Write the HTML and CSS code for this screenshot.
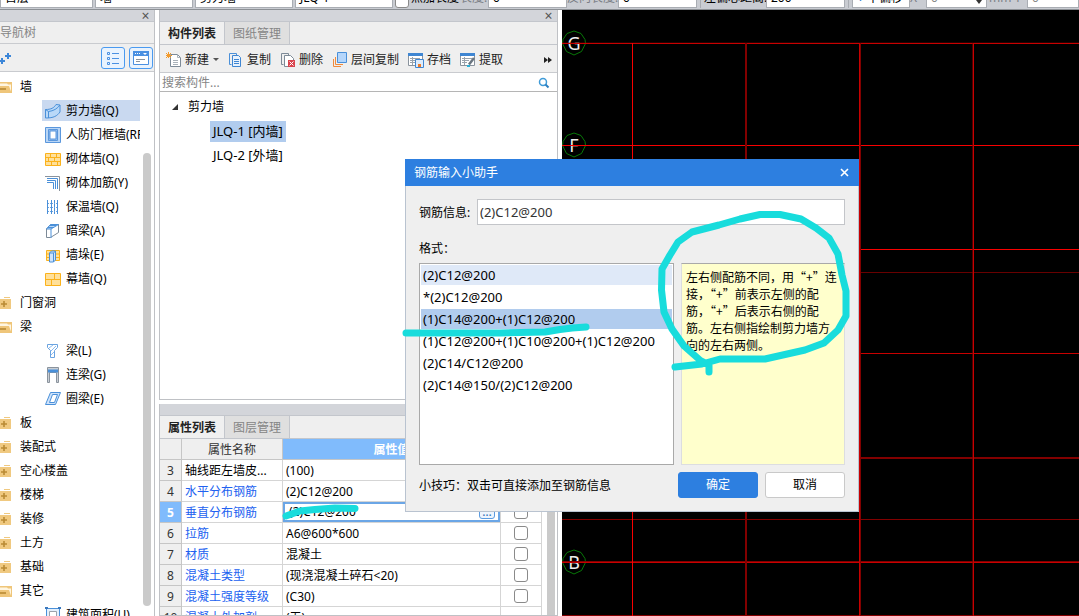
FILE: index.html
```html
<!DOCTYPE html>
<html lang="zh-CN">
<head>
<meta charset="utf-8">
<title>钢筋输入小助手</title>
<link rel="stylesheet" href="styles.css">
</head>
<body>
<svg class="defs" aria-hidden="true">
  <symbol id="closed" viewBox="0 0 12 14"><path d="M0 3h4V1h6v2h1v10H0z" fill="#f0c980"/><path d="M4 2.500h6" stroke="#fff" stroke-width="1"/><path d="M4 5v6M1 8h6" stroke="#b98a34" stroke-width="1.600"/></symbol>
  <symbol id="opened" viewBox="0 0 12 14"><path d="M0 2h12v11H0z" fill="#efc67a"/><path d="M0 3.500h7l1 1h3v7L9 6H0z" fill="#fff6e2"/><path d="M0 6h8l2 7H0z" fill="#efc67a"/><path d="M0 9h6" stroke="#b98a34" stroke-width="1.600"/></symbol>
  <symbol id="shear" viewBox="0 0 16 16"><path d="M.5 6.500C6 6.500 9 5 11 1.500l4 .5v7c-3 4-6 6-14.500 6z" fill="#b9d8f8" stroke="#4a90d9"/><path d="M.5 6.500l3 2c5-.5 9-3 11.500-6.500M3.500 8.500v6.500" fill="none" stroke="#4a90d9"/></symbol>
  <symbol id="frame" viewBox="0 0 16 16"><path d="M.5.500h15v15H.5z" fill="#b9d6f6" stroke="#5b97dc"/><path d="M3.500 2.500h9v11h-9z" fill="#8db9ee" stroke="#5b97dc"/><path d="M5 4h6v8H5z" fill="#fff" stroke="#5b97dc"/></symbol>
  <symbol id="brick" viewBox="0 0 16 16"><path d="M.5 2.500h15v12H.5z" fill="#ffe09a" stroke="#fbb21c"/><path d="M0 6.500h16M0 10.500h16M5.500 2v4M11.500 2v4M3.500 7v4M9.500 7v4M6.500 11v4M12.500 11v4" stroke="#fbb21c"/></symbol>
  <symbol id="rebar" viewBox="0 0 16 16"><path d="M0 1.500h14.500V16" fill="none" stroke="#8a939d"/><path d="M2 3.500h10.500V14M2 5.500h8.500V14M2 7.500h6.500V14" fill="none" stroke="#4a90d9"/></symbol>
  <symbol id="insul" viewBox="0 0 16 16"><path d="M2.500 1v14M6.500 1v14M9.500 1v14M12.500 1v14" stroke="#4a90d9"/><path d="M3 4.500h10M3 8.500h10M3 12.500h10" stroke="#6aa3e0" stroke-dasharray="1 1"/></symbol>
  <symbol id="hbeam" viewBox="0 0 16 16"><path d="M1.500 6l4-4.500h8v8l-8 5h-4z" fill="#fff" stroke="#7d8a97"/><path d="M1.500 6l4-4.500h8L6 6z" fill="#b9d8f8" stroke="#4a90d9"/><path d="M6 6v9M3 4.500h6M5 2.500h6" fill="none" stroke="#4a90d9"/></symbol>
  <symbol id="pier" viewBox="0 0 16 16"><path d="M1.500 3.500h13v10h-13z" fill="#ffe09a" stroke="#fbb21c"/><path d="M1 7h14M1 10.500h14" stroke="#fbb21c"/><path d="M4.500 6l2-2h4v9l-2 2h-4z" fill="#cfe3fb" stroke="#4a90d9"/><path d="M8.500 6v9M4.500 6h4l2-2" fill="none" stroke="#4a90d9"/></symbol>
  <symbol id="curtain" viewBox="0 0 16 16"><path d="M.5 2.500h15v12H.5z" fill="#ffe09a" stroke="#fbb21c"/><path d="M0 8.500h16M9.500 2v6M6.500 9v6" stroke="#fbb21c"/></symbol>
  <symbol id="beam" viewBox="0 0 16 16"><path d="M2.500 1.500h10v3l-3 3v7h-4v-7l-3-3z" fill="#fff" stroke="#6aa3e0"/><path d="M4 5l4-3M6 8l5-5M6 12l3-3" stroke="#8cbcf0"/></symbol>
  <symbol id="link" viewBox="0 0 16 16"><path d="M2.500.500h11v15h-2V5.500h-7v10h-2z" fill="#c9ced4" stroke="#8a939d"/><path d="M3 2.500h10v3H3z" fill="#4a90d9"/></symbol>
  <symbol id="ring" viewBox="0 0 16 16"><path d="M5.500 1.500h10l-5 12H.5z" fill="#cfe3fb" stroke="#4a90d9"/><path d="M7.500 3.500h5l-3 8h-5z" fill="#fff" stroke="#4a90d9"/></symbol>
  <symbol id="area" viewBox="0 0 16 16"><path d="M1.500 1.500h13V16h-13z" fill="#e3effc" stroke="#4a90d9"/><path d="M4.500 4.500h7V16h-7z" fill="#fff" stroke="#9aa3ac"/><path d="M0 0h3v2H0zM13 0h3v2h-3z" fill="#3a78bd"/></symbol>
</svg>

<header class="topbar">
  <div class="box w-first">首层</div>
  <div class="box w-drop">墙</div>
  <div class="box w-drop">剪力墙</div>
  <div class="box w-drop">JLQ-1</div>
  <input class="check" type="checkbox" aria-label="点加长度">
  <span class="lab dark w-add">点加长度</span>
  <span class="lab w-len">长度:</span>
  <div class="box w-num">0</div>
  <span class="lab w-rev">反向长度:</span>
  <div class="box w-num">0</div>
  <i class="sep"></i>
  <span class="lab dark w-off">左偏心距离:</span>
  <div class="box w-num">200</div>
  <i class="sep"></i>
  <div class="box w-mode"><b class="plus">+</b> 不偏移</div>
  <span class="lab w-x">X=</span>
  <div class="box w-spin muted"><span>0</span><i class="spin"></i></div>
  <span class="lab w-mm">mm Y=</span>
  <div class="box w-rest muted">0</div>
</header>

<main class="work">
  <aside class="nav">
    <div class="strip"><button class="x" aria-label="关闭">×</button></div>
    <h2 class="navtitle">导航树</h2>
    <div class="navtools">
      <svg class="pluses" width="12" height="14"><path d="M0 10h5M2 7v6M5 5h6M8 2v6" stroke="#3c86d8" stroke-width="2"/></svg>
      <span class="grow"></span>
      <button class="sq" aria-label="列表"><svg width="14" height="14"><path d="M1.500 1.500h2v2h-2zM1.500 6.500h2v2h-2zM1.500 11.500h2v2h-2z" fill="none" stroke="#4a90e2"/><path d="M6 2.500h7M6 7.500h7M6 12.500h7" stroke="#4a90e2"/></svg></button>
      <button class="sq" aria-label="窗口"><svg width="16" height="14"><path d="M.5.500h15v13H.5z" fill="#fff" stroke="#4a90e2"/><path d="M0 0h16v5H0z" fill="#4a90e2"/><path d="M2 2h1v1H2zM4 2h1v1H4zM6 2h1v1H6zM10 2h4l-2 2z" fill="#fff"/><path d="M3 8.500h9M3 10.500h4" stroke="#8a939d"/></svg></button>
    </div>
    <div class="navbody">
      <ul class="tree">
        <li class="group"><svg><use href="#opened"/></svg>墙</li>
        <li class="leaf sel"><svg><use href="#shear"/></svg>剪力墙(Q)</li>
        <li class="leaf"><svg><use href="#frame"/></svg>人防门框墙(RF)</li>
        <li class="leaf"><svg><use href="#brick"/></svg>砌体墙(Q)</li>
        <li class="leaf"><svg><use href="#rebar"/></svg>砌体加筋(Y)</li>
        <li class="leaf"><svg><use href="#insul"/></svg>保温墙(Q)</li>
        <li class="leaf"><svg><use href="#hbeam"/></svg>暗梁(A)</li>
        <li class="leaf"><svg><use href="#pier"/></svg>墙垛(E)</li>
        <li class="leaf"><svg><use href="#curtain"/></svg>幕墙(Q)</li>
        <li class="group"><svg><use href="#closed"/></svg>门窗洞</li>
        <li class="group"><svg><use href="#opened"/></svg>梁</li>
        <li class="leaf"><svg><use href="#beam"/></svg>梁(L)</li>
        <li class="leaf"><svg><use href="#link"/></svg>连梁(G)</li>
        <li class="leaf"><svg><use href="#ring"/></svg>圈梁(E)</li>
        <li class="group"><svg><use href="#closed"/></svg>板</li>
        <li class="group"><svg><use href="#closed"/></svg>装配式</li>
        <li class="group"><svg><use href="#closed"/></svg>空心楼盖</li>
        <li class="group"><svg><use href="#closed"/></svg>楼梯</li>
        <li class="group"><svg><use href="#closed"/></svg>装修</li>
        <li class="group"><svg><use href="#closed"/></svg>土方</li>
        <li class="group"><svg><use href="#closed"/></svg>基础</li>
        <li class="group"><svg><use href="#opened"/></svg>其它</li>
        <li class="leaf"><svg><use href="#area"/></svg>建筑面积(U)</li>
      </ul>
      <div class="track"><div class="thumb"></div></div>
    </div>
  </aside>

  <div class="middle">
    <section class="panel parts">
      <div class="strip"><button class="x" aria-label="关闭">×</button></div>
      <div class="tabs"><button class="tab on">构件列表</button><button class="tab">图纸管理</button></div>
      <div class="tools">
        <button class="tool"><svg width="16" height="16"><path d="M4.500 2.500h7l3 3v9h-10z" fill="#fff" stroke="#7d8a97"/><path d="M11.500 2.500v3h3M7 8.500h5M7 10.500h5M7 12.500h5" fill="none" stroke="#a9b1b9"/><path d="M0 1l5 5M5 1L0 6M2.500 0v6M0 3.500h6" stroke="#f39a2b"/></svg>新建<i class="caret"></i></button>
        <button class="tool"><svg width="16" height="16"><path d="M3.500 12.500h-2v-11h7v2" fill="none" stroke="#4a90d9"/><path d="M4.500 3.500h6l2 2v9h-8z" fill="#e8f2fd" stroke="#3f86d2"/><path d="M6 7.500h5M6 9.500h5M6 11.500h5" stroke="#3f86d2"/></svg>复制</button>
        <button class="tool"><svg width="16" height="16"><path d="M3.500 12.500h-2v-11h7v2" fill="none" stroke="#7d8a97"/><path d="M4.500 3.500h6l3 3v8h-9z" fill="#fff" stroke="#7d8a97"/><path d="M8 8h7v7H8z" fill="#d9434c"/><path d="M9.500 9.500l4 4M13.500 9.500l-4 4" stroke="#fff"/></svg>删除</button>
        <button class="tool"><svg width="16" height="16"><path d="M1.500 7v7.500H9" fill="none" stroke="#f08a3c"/><path d="M3.500 5v7.500H11" fill="none" stroke="#f08a3c"/><path d="M5.500.500h9v10h-9z" fill="#b5d6fb" stroke="#4a90d9"/></svg>层间复制</button>
        <button class="tool"><svg width="16" height="16"><path d="M.5 1.500h14v12H.5z" fill="#fff" stroke="#8a939d"/><path d="M0 1h15v3H0z" fill="#3f86d2"/><path d="M2 6.500h10M2 8.500h5M2 10.500h5M4.500 5v8" stroke="#9aa3ac"/><path d="M7.500 7.500h8v8h-8z" fill="#dcebfb" stroke="#3f86d2"/><path d="M10 12h3v3h-3z" fill="#ee7b28"/></svg>存档</button>
        <button class="tool"><svg width="16" height="16"><path d="M.5 1.500h14v12H.5z" fill="#fff" stroke="#8a939d"/><path d="M0 1h15v3H0z" fill="#3f86d2"/><path d="M2 6.500h10M2 8.500h7M2 10.500h5M4.500 5v8" stroke="#9aa3ac"/><path d="M9 12.500l5-6.500" stroke="#6b7681" stroke-width="2.500"/><path d="M7 14h3" stroke="#28b0d8" stroke-width="2"/></svg>提取</button>
        <span class="grow"></span>
        <svg width="8" height="8"><path d="M0 1l4 3-4 3zM4 1l4 3-4 3z" fill="#222"/></svg>
      </div>
      <label class="search"><input type="text" placeholder="搜索构件..." aria-label="搜索构件"><svg width="12" height="12"><circle cx="5" cy="5" r="3.500" fill="none" stroke="#3f9bd8" stroke-width="1.500"/><path d="M7.500 7.500l3 3" stroke="#2d7fc0" stroke-width="2"/></svg></label>
      <ul class="plist">
        <li class="root"><svg width="8" height="8"><path d="M7 1v6H1z" fill="#333"/></svg>剪力墙</li>
        <li><span class="pick">JLQ-1 [内墙]</span></li>
        <li><span>JLQ-2 [外墙]</span></li>
      </ul>
    </section>
    <section class="panel props">
      <div class="strip"></div>
      <div class="tabs"><button class="tab on">属性列表</button><button class="tab">图层管理</button></div>
      <div class="gridwrap">
        <table>
          <colgroup><col class="c1"><col class="c2"><col class="c3"><col class="c4"></colgroup>
          <thead><tr><th></th><th>属性名称</th><th class="act">属性值</th><th></th></tr></thead>
          <tbody>
            <tr><th>3</th><td class="own">轴线距左墙皮...</td><td>(100)</td><td><input class="check" type="checkbox" aria-label="3"></td></tr>
            <tr><th>4</th><td>水平分布钢筋</td><td>(2)C12@200</td><td><input class="check" type="checkbox" aria-label="4"></td></tr>
            <tr class="cur"><th>5</th><td>垂直分布钢筋</td><td><div class="edit"><span>(2)C12@200</span><button class="more" aria-label="更多">…</button></div></td><td><input class="check" type="checkbox" aria-label="5"></td></tr>
            <tr><th>6</th><td>拉筋</td><td>A6@600*600</td><td><input class="check" type="checkbox" aria-label="6"></td></tr>
            <tr><th>7</th><td>材质</td><td>混凝土</td><td><input class="check" type="checkbox" aria-label="7"></td></tr>
            <tr><th>8</th><td>混凝土类型</td><td>(现浇混凝土碎石&lt;20)</td><td><input class="check" type="checkbox" aria-label="8"></td></tr>
            <tr><th>9</th><td>混凝土强度等级</td><td>(C30)</td><td><input class="check" type="checkbox" aria-label="9"></td></tr>
            <tr><th>10</th><td>混凝土外加剂</td><td>(无)</td><td></td></tr>
          </tbody>
        </table>
        <div class="ptrack"></div>
      </div>
    </section>
  </div>

  <section class="canvas">
    <svg width="100%" height="100%">
      <g fill="none" stroke="#087808"><path id="o" d="M12 21l7 2.500 4 6 .5 4-4 8-7.500 3.500-7.500-3.500-4-8 .5-4 4-6z"/><use href="#o" y="102"/><use href="#o" y="519"/></g>
      <g class="axis"><text x="12" y="40">G</text><text x="12" y="142">F</text><text x="12" y="559">B</text></g>
      <g shape-rendering="crispEdges">
        <rect class="r2" y="33" width="100%" height="1"/><rect class="r1" y="32" width="100%" height="1" opacity=".3"/>
        <rect class="r3" y="135" width="100%" height="1"/>
        <rect class="r3" y="239" width="100%" height="1"/>
        <rect class="r1" y="262" width="100%" height="1" opacity=".8"/>
        <rect class="r2" y="343" width="100%" height="1"/>
        <rect class="r1" y="447" width="100%" height="2"/>
        <rect class="r1" y="509" width="100%" height="1"/>
        <rect class="r1" y="551" width="100%" height="2"/><rect class="r2" y="552" width="100%" height="1"/>
        <rect class="r1" y="605" width="100%" height="1"/>
        <rect class="r3" x="70" y="33" width="1" height="100%"/>
        <rect class="r1" x="183" y="33" width="2" height="100%"/>
        <rect class="r1" x="298" y="33" width="1" height="100%"/><rect class="r2" x="297" y="33" width="1" height="100%"/>
        <rect class="r1" x="410" y="33" width="1" height="100%" opacity=".6"/><rect class="r2" x="411" y="33" width="1" height="100%"/>
      </g>
    </svg>
  </section>
</main>

<section class="dialog" role="dialog" aria-labelledby="dt">
  <div class="dhead"><h1 id="dt">钢筋输入小助手</h1><button aria-label="关闭"><svg width="9" height="9"><path d="M1 1l7 7M8 1L1 8" stroke="#fff" stroke-width="1.600"/></svg></button></div>
  <div class="dbody">
    <div class="field"><label for="info">钢筋信息:</label><input id="info" type="text" value="(2)C12@200"></div>
    <div class="fmt">格式<span class="mid">：</span></div>
    <div class="cols">
      <ul class="formats">
        <li class="hov">(2)C12@200</li>
        <li>*(2)C12@200</li>
        <li class="pick">(1)C14@200+(1)C12@200</li>
        <li>(1)C12@200+(1)C10@200+(1)C12@200</li>
        <li>(2)C14/C12@200</li>
        <li>(2)C14@150/(2)C12@200</li>
      </ul>
      <p class="hint">左右侧配筋不同<span class="mid">，</span>用“+”连<br>接，“+”前表示左侧的配<br>筋，“+”后表示右侧的配<br>筋。左右侧指绘制剪力墙方<br>向的左右两侧。</p>
    </div>
    <div class="foot"><span>小技巧<span class="mid">：</span>双击可直接添加至钢筋信息</span><span class="grow"></span><button class="btn main">确定</button><button class="btn">取消</button></div>
  </div>
</section>

<svg class="marks" width="860" height="530" aria-hidden="true">
  <g fill="none" stroke="#18dcdc" stroke-width="7" stroke-linecap="round" stroke-linejoin="round">
    <path d="M406 333H500L545 332L560 329.500L572 328L586 327"/>
    <path d="M286 516L300 511L315 509.500L335 508L355 508.500"/>
    <path d="M709 372V365L701 361L684 346L672 329L664 312L661.500 290L662 269L670 255L678 242L692 232L719 225L740 219L760 214.500H780L801 219L816 228L829 238L838 254L842 275L846 291V316L838 330L824 343L805 350L765 359H720L702 364L675 367"/>
  </g>
</svg>
</body>
</html>
```
FILE: styles.css
```css
* { box-sizing: border-box; }
body {
  margin: 0;
  height: 100vh;
  display: flex;
  flex-direction: column;
  overflow: hidden;
  position: relative;
  background: #fff;
  color: #000;
  font: 12px/16px "Noto Sans", "Noto Sans CJK SC", sans-serif;
}
button, input { font: inherit; color: inherit; padding: 0; margin: 0; }
button { border: 0; background: none; }
ul { list-style: none; margin: 0; padding: 0; }
h1, h2, p { margin: 0; font: inherit; }
svg { flex: none; }
.defs { position: absolute; width: 0; height: 0; }
.grow { flex: 1; }
.mid { font-family: "Noto Sans CJK TC", sans-serif; }

.topbar {
  flex: none;
  height: 10px;
  display: flex;
  align-items: flex-end;
  overflow: hidden;
  padding-bottom: 1px;
  background: #c9ccd2;
  border-bottom: 1px solid #8c9095;
}
.topbar > * { flex: none; white-space: nowrap; }
.box { height: 20px; line-height: 18px; padding-left: 4px; margin-right: 2px; background: #fff; border: 1px solid #a9adb3; }
.lab { height: 20px; line-height: 20px; color: #7b7f86; }
.dark { color: #000; }
.muted { color: #888; }
.w-first { width: 93px; }
.w-drop { width: 98px; }
.w-add { width: 49px; margin-left: 2px; }
.w-len { width: 28px; }
.w-rev { width: 51px; }
.w-num { width: 79px; margin-right: 0; }
.w-off { width: 62px; }
.w-mode { width: 58px; margin-right: 0; }
.w-x { width: 16px; }
.w-spin { width: 61px; display: flex; justify-content: space-between; }
.w-mm { width: 38px; }
.topbar .w-rest { flex: 1; margin-right: 0; }
.sep { width: 1px; height: 16px; margin: 0 3px; background: #a9adb3; }
.plus { color: #3f86d2; }
.spin { align-self: flex-end; margin: 0 4px 3px 0; border: 3px solid transparent; border-top: 4px solid #333; border-bottom: 0; }

.check { appearance: none; width: 14px; height: 14px; border: 1px solid #8a8a8a; border-radius: 3px; background: #fff; }

.work { flex: 1; min-height: 0; display: flex; }
.strip { flex: none; height: 12px; display: flex; justify-content: flex-end; background: #d3d5da; border-bottom: 1px solid #c3c6cc; }
.x { width: 17px; font-size: 14px; line-height: 12px; color: #555; }

.nav { flex: none; width: 155px; display: flex; flex-direction: column; border-right: 1px solid #bfc1c5; }
.navtitle { height: 22px; line-height: 22px; color: #858585; background: #efefef; border-bottom: 1px solid #c9cbcf; }
.navtools { height: 28px; display: flex; align-items: center; gap: 4px; padding-right: 1px; background: #efefef; border-bottom: 1px solid #c9cbcf; }
.sq { width: 24px; height: 22px; display: grid; place-items: center; border: 1px solid #4a9af0; border-radius: 3px; background: #e9f3fe; }
.navbody { flex: 1; min-height: 0; display: flex; overflow: hidden; }
.tree { flex: none; width: 140px; padding-top: 2px; overflow: hidden; }
.tree li { height: 24px; padding-top: 2px; display: flex; align-items: center; white-space: nowrap; }
.group svg { width: 12px; height: 14px; margin-right: 8px; }
.leaf { margin-left: 42px; padding-left: 3px; overflow: hidden; }
.leaf svg { width: 16px; height: 16px; margin-right: 5px; }
.tree .sel { height: 21px; margin-top: 2px; margin-bottom: 1px; padding-top: 0; background: #c9d9f0; }
.track { flex: 1; padding: 81px 3px 10px; }
.thumb { height: 100%; border-radius: 4px; background: #cacaca; }

.middle { flex: none; width: 399px; margin: 0 4px; display: flex; flex-direction: column; gap: 4px; }
.panel { display: flex; flex-direction: column; border: 1px solid #bfc1c5; border-top: 0; }
.parts { flex: 390 1 0; min-height: 0; }
.props { flex: 212 1 0; min-height: 0; overflow: hidden; }
.tabs { flex: none; height: 23px; display: flex; background: #efefef; border-bottom: 1px solid #c3c6cc; }
.tab { width: 65px; padding-top: 2px; border-right: 1px solid #c3c6cc; background: #dfdfdf; color: #858585; }
.on { background: #f0f0f0; color: #222; font-weight: bold; }
.tools { flex: none; height: 28px; display: flex; align-items: center; gap: 9px; padding: 2px 5px 0 6px; background: #efefef; border-bottom: 1px solid #c9cbcf; }
.tool { display: flex; align-items: center; gap: 3px; color: #222; white-space: nowrap; }
.caret { margin-left: 1px; border: 3px solid transparent; border-top-color: #555; border-bottom: 0; }
.search { flex: none; height: 19px; display: flex; align-items: center; padding: 1px 7px 0 2px; border-bottom: 1px solid #b5b5b5; }
.search input { flex: 1; border: 0; outline: 0; background: none; }
.search input::placeholder { color: #858585; }
.plist { padding-top: 3px; }
.plist li { height: 24px; padding-left: 50px; display: flex; align-items: center; }
.plist .root { padding-left: 11px; gap: 9px; }
.plist span { height: 21px; line-height: 20px; padding: 0 3px; font-size: 13px; }
.pick { background: #b1ccee; }

.gridwrap { display: flex; }
table { flex: none; width: 381px; table-layout: fixed; border-collapse: separate; border-spacing: 0; }
.c1 { width: 22px; }
.c2 { width: 101px; }
.c3 { width: 218px; }
.c4 { width: 41px; }
tr { height: 21px; }
th, td { height: 21px; padding: 2px 0 0; border-right: 1px solid #d5d5d5; border-bottom: 1px solid #d5d5d5; line-height: 16px; white-space: nowrap; overflow: hidden; }
th { font-weight: normal; background: #efefef; color: #333; text-align: center; border-color: #c6c6c6; }
.act { background: #80bbfc; color: #fff; font-weight: bold; }
td { padding-left: 3px; }
td:nth-child(2) { color: #2161f0; }
td.own { color: #000; }
td:nth-child(4) { padding: 0; text-align: center; }
td .check { display: block; margin: 0 auto; }
.cur th { background: #80bbfc; color: #fff; font-weight: bold; }
.cur td:nth-child(3) { padding: 0; }
.edit { height: 20px; display: flex; align-items: center; justify-content: space-between; padding: 0 3px 0 4px; border: 2px solid #6ba6e6; }
.more { width: 16px; height: 14px; line-height: 8px; border: 1px solid #5b9be0; border-radius: 3px; background: #eef5fd; color: #2f6fb8; }
.ptrack { width: 8px; margin-left: 5px; background: #cacaca; }

.canvas { flex: 1; min-width: 0; overflow: hidden; background: #000; }
.canvas svg { display: block; }
.axis { fill: #eee; font-size: 18px; text-anchor: middle; }
.r1 { fill: #820000; }
.r2 { fill: #c80000; }
.r3 { fill: #f80000; }

.dialog { position: absolute; left: 405px; top: 159px; width: 454px; background: #efefef; }
.dhead { height: 27px; display: flex; align-items: center; justify-content: space-between; padding: 0 10px 0 9px; background: #2d7fe0; color: #fff; }
.dhead button { display: flex; }
.dbody { padding: 13px 13px; border: 1px solid #b9c3d0; border-top: 0; }
.field { display: flex; align-items: center; }
.field label { width: 58px; padding-top: 2px; }
.field input { flex: 1; height: 26px; padding-left: 2px; border: 1px solid #c3c5c9; background: #fff; color: #333; font-size: 13px; }
.fmt { height: 16px; margin: 15px 0 7px; }
.cols { display: flex; gap: 7px; height: 202px; }
.formats { width: 255px; padding: 1px; border: 1px solid #a9a9a9; background: #fff; font-size: 13px; }
.formats li { height: 20px; line-height: 20px; margin-bottom: 2px; padding-left: 2px; white-space: nowrap; }
.hov { background: #dfe9f8; }
.hint { flex: 1; padding: 4px 0 0 4px; border: 1px solid #dcdde0; border-top-color: #a9a9a9; background: #ffc; font-family: "Noto Sans CJK SC", sans-serif; line-height: 17px; white-space: nowrap; }
.foot { display: flex; align-items: center; gap: 7px; margin-top: 7px; }
.foot .grow { margin-left: -7px; }
.btn { width: 80px; height: 26px; border: 1px solid #c9c9c9; border-radius: 3px; background: #fff; }
.main { border-color: #2d7fe0; background: #2d7fe0; color: #fff; }
.marks { position: absolute; left: 0; top: 0; pointer-events: none; }
```
